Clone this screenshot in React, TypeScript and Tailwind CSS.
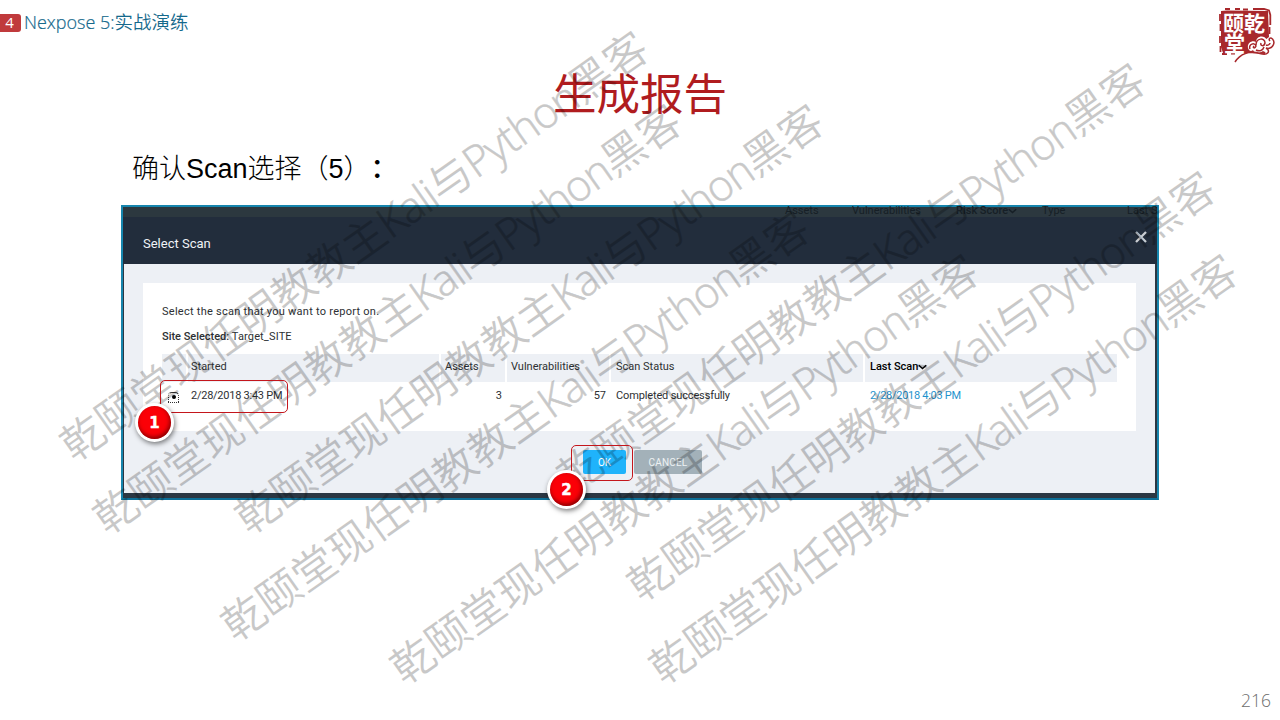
import type { ReactNode } from "react";

const WATERMARKS = [
  { x: 83, y: 437 },
  { x: 116, y: 510 },
  { x: 258, y: 510 },
  { x: 244, y: 617 },
  { x: 413, y: 660 },
  { x: 580, y: 469 },
  { x: 650, y: 577 },
  { x: 672, y: 660 },
];

function Watermark({ x, y }: { x: number; y: number }) {
  return (
    <div
      className="pointer-events-none absolute flex h-[44px] origin-[22px_22px] -rotate-[35.2deg] items-center whitespace-nowrap font-['Open_Sans','Noto_Sans_CJK_SC',sans-serif] text-[43px] leading-[44px] font-[350] text-black opacity-21"
      style={{ left: x - 22, top: y - 22 }}
    >
      <span>乾颐堂现任明教教主</span>
      <span className="font-light tracking-[-1.3px] [-webkit-text-stroke:0.6px_black]">Kali</span>
      <span>与</span>
      <span className="font-light tracking-[-1px] [-webkit-text-stroke:0.6px_black]">Python</span>
      <span>黑客</span>
    </div>
  );
}

function Badge({ children, className }: { children: ReactNode; className: string }) {
  return (
    <div
      className={`absolute flex size-[39px] items-center justify-center rounded-full bg-white shadow-[1px_2px_5px_rgba(0,0,0,0.5)] ${className}`}
    >
      <div className="flex size-[33px] items-center justify-center rounded-full bg-[#fb0007] pt-[2px] font-['DejaVu_Sans',sans-serif] text-[15px] font-bold text-white shadow-[inset_-1px_-2px_4px_rgba(90,0,0,0.75)] [-webkit-text-stroke:0.4px_white]">
        {children}
      </div>
    </div>
  );
}

function Chevron() {
  return (
    <svg className="h-[6px] w-[9px]" viewBox="0 0 9 6" fill="none" stroke="currentColor" strokeWidth="1.5">
      <path d="M0.8 1.2 4.5 4.5 8.2 1.2" />
    </svg>
  );
}

function Seal() {
  return (
    <div className="relative h-[56px] w-[58px]">
      <svg className="absolute inset-0 h-[56px] w-[58px]" viewBox="0 0 58 56">
        <path
          d="M3 4 9 3.500 50 4 51 30 47 33 49 38 47 47 30 46 5 46 3 40Z"
          fill="#a8282c"
        />
        <path
          d="M7 2H12M17 2H22M25 2.500H30M35 2H46L51 3.500L52.300 8V18M51.500 20V27M2 7V14M2.500 17V24M2 29V36M2.500 39V45M4 47H9M13 46.500H17"
          fill="none"
          stroke="#a8282c"
          strokeWidth="1.8"
        />
        <path
          d="M30 41C29 36 34 33 38 35C38 29 46 27 49 33C53 29 56 33 54 39C52 43 49 47 45 44C41 47 36 46 35 43C33 45 31 44 30 41Z"
          fill="#fff"
        />
        <path
          d="M17 55C22 47 31 43 42 46.500C50 49 53 44 48 41C54 43 58 36 54.500 32C52 30 50 32 52 34M32 42C30 37 37 35 38 39C37 42 34 41 36 39M38 38C38 31 47 30 47 36C46 40 42 39 43 36M38 43C42 45 45 43 46 40M48 38C50 39 52 37 52 36"
          fill="none"
          stroke="#a8282c"
          strokeWidth="1.5"
        />
      </svg>
      <div className="absolute top-[5px] left-[5px] w-[46px] font-['Noto_Sans_CJK_SC',sans-serif] text-[21px] leading-[20px] font-bold text-white">
        <div>颐乾</div>
        <div className="pl-px">堂</div>
      </div>
    </div>
  );
}

export default function App() {
  return (
    <div className="relative h-[720px] w-[1280px] overflow-hidden bg-white font-['Roboto',sans-serif]">
      <header className="flex h-[64px] items-start justify-between">
        <div className="flex items-start pt-[11px]">
          <div className="flex h-[23px] w-[21px] items-center justify-center">
            <span className="flex h-[18px] w-[21px] items-center justify-center rounded-r-[3px] bg-[#c03a3c] pr-[2px] font-['Open_Sans',sans-serif] text-[15px] text-white">
              4
            </span>
          </div>
          <div className="-mt-px pl-[3px] font-['Open_Sans','Noto_Sans_CJK_SC',sans-serif] text-[18px] leading-[23px] text-[#15698c]">
            <span className="font-light [-webkit-text-stroke:0.2px_#15698c]">Nexpose 5:</span>
            <span className="text-[18.5px] font-[350]">实战演练</span>
          </div>
        </div>
        <div className="mt-[7px] mr-[4px]">
          <Seal />
        </div>
      </header>

      <h1 className="h-[64px] text-center font-['Noto_Sans_CJK_SC',sans-serif] text-[43.5px] leading-[55px] font-normal text-[#b01c1f]">
        生成报告
      </h1>

      <p className="h-[77px] pt-[21px] pl-[132px] font-['Liberation_Sans','Noto_Sans_CJK_SC',sans-serif] text-[27px] leading-[40px] font-light text-black [text-spacing-trim:space-all]">
        确认Scan选择（5）<span className="font-medium">：</span>
      </p>

      <section className="ml-[121px] flex h-[295px] w-[1038px] flex-col border-2 border-[#1685ad] border-b-[#0d6f97] bg-[#2b3743]">
        <div className="flex h-[10px] items-center bg-[#2c383f] pl-[662px] text-[11px] leading-[10px] text-[#161f26]">
          <span className="w-[67px] shrink-0 pb-[2px]">Assets</span>
          <span className="w-[104px] shrink-0 pb-[2px]">Vulnerabilities</span>
          <span className="flex w-[86px] shrink-0 items-center pb-[2px] font-medium whitespace-nowrap">
            Risk Score
            <Chevron />
          </span>
          <span className="w-[85px] shrink-0 pb-[2px]">Type</span>
          <span className="w-[29px] shrink-0 pb-[2px] whitespace-nowrap">Last S</span>
        </div>
        <div className="flex h-[47px] items-center justify-between bg-[#222d3c] pr-[10px] pl-[20px]">
          <span className="pt-[7px] text-[13px] text-[#f0f3f7]">Select Scan</span>
          <svg className="mb-[8px] size-[12px]" viewBox="0 0 12 12" stroke="#c9cdd2" strokeWidth="2.3">
            <path d="M1 1 11 11M11 1 1 11" />
          </svg>
        </div>
        <div className="mr-[2px] ml-px flex h-[229px] flex-col bg-[#edf0f5] pt-[19px] pr-[19px] pl-[19px] text-[11px] text-[#2d3033]">
          <div className="h-[148px] bg-white pt-[20px] pr-[19px] pl-[19px]">
            <p className="h-[26px] pt-px leading-[16px] tracking-[0.26px]">
              Select the scan that you want to report on.
            </p>
            <p className="h-[25px] leading-[16px] tracking-[0.15px]">
              <span className="font-medium tracking-[-0.02px]">Site Selected:</span> Target_SITE
            </p>
            <div className="grid h-[28px] grid-cols-[24px_251px_64px_102px_252px_252px] gap-x-[2px] bg-white leading-[26px] [&>div]:bg-[#edf0f5]">
              <div />
              <div className="pl-[3px]">Started</div>
              <div className="pl-[4px]">Assets</div>
              <div className="pl-[4px]">Vulnerabilities</div>
              <div className="pl-[5px]">Scan Status</div>
              <div className="flex items-center pb-[2px] pl-[5px] font-medium text-black">
                Last Scan
                <Chevron />
              </div>
            </div>
            <div className="grid h-[28px] grid-cols-[24px_251px_64px_102px_252px_252px] gap-x-[2px] pt-px leading-[26px]">
              <div className="flex items-center pt-px pl-[6px]">
                <span className="flex size-[11px] items-center justify-center rounded-t-[4px] border border-dotted border-[#333] [border-top-style:solid]">
                  <span className="size-[4px] rounded-full bg-black" />
                </span>
              </div>
              <div className="pl-[3px] tracking-[-0.25px]">2/28/2018 3:43 PM</div>
              <div className="pr-[3px] text-right">3</div>
              <div className="pr-[3px] text-right">57</div>
              <div className="pl-[5px] tracking-[-0.14px]">Completed successfully</div>
              <div className="pl-[5px] tracking-[-0.28px] text-[#1f93cd]">2/28/2018 4:03 PM</div>
            </div>
          </div>
          <div className="flex gap-[8px] pt-[19px] pl-[440px] text-[10px] text-white">
            <button className="h-[24px] w-[43px] rounded-[2px] bg-[#1fb3fb]">OK</button>
            <button className="h-[24px] w-[68px] rounded-[2px] bg-[#a3b1b9] tracking-[0.2px] text-[#eef1f3]">
              CANCEL
            </button>
          </div>
        </div>
      </section>

      {WATERMARKS.map((mark) => (
        <Watermark key={`${mark.x}-${mark.y}`} {...mark} />
      ))}

      <div className="absolute top-[380px] left-[160px] h-[33px] w-[128px] rounded-[5px] border border-[#c4161c]" />
      <div className="absolute top-[445px] left-[571px] h-[36px] w-[62px] rounded-[5px] border border-[#c4161c]" />
      <Badge className="top-[403px] left-[135px]">1</Badge>
      <Badge className="top-[470px] left-[547px]">2</Badge>

      <footer className="flex h-[220px] items-end justify-end pr-[9px] pb-[9px] font-['Open_Sans',sans-serif] text-[17.5px] leading-[22px] font-light text-[#6c6c6c]">
        216
      </footer>
    </div>
  );
}
